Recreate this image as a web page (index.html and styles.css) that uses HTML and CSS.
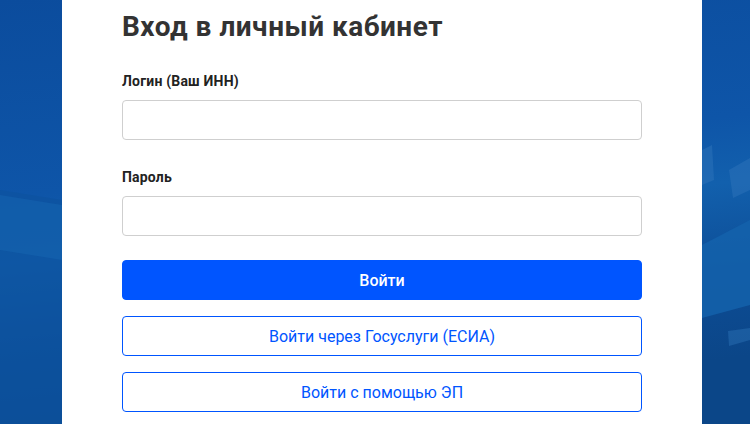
FILE: index.html
```html
<!DOCTYPE html>
<html lang="ru">
<head>
<meta charset="utf-8">
<title>Вход в личный кабинет</title>
<link rel="stylesheet" href="styles.css">
</head>
<body>
<svg class="bg-art" viewBox="0 0 750 424" preserveAspectRatio="none" aria-hidden="true">
  <defs>
    <linearGradient id="g" x1="0" y1="0" x2="0.2" y2="1">
      <stop offset="0" stop-color="#0b4c9d"/>
      <stop offset="0.45" stop-color="#0e55a8"/>
      <stop offset="0.6" stop-color="#1260ad"/>
      <stop offset="0.8" stop-color="#0d4d96"/>
      <stop offset="1" stop-color="#0b4688"/>
    </linearGradient>
  </defs>
  <rect width="750" height="424" fill="url(#g)"/>
  <polygon points="0,190 62,200 62,424 0,424" fill="#0d52a0" opacity="0.7"/>
  <polygon points="0,195 62,205 62,260 0,250" fill="#1565b2" opacity="0.5"/>
  <polygon points="702,150 712,145 714,180 702,185" fill="#2a70b8" opacity="0.6"/>
  <polygon points="729,170 750,158 750,190 733,198" fill="#2a70b8" opacity="0.6"/>
  <polygon points="702,245 750,220 750,305 702,318" fill="#1463ad" opacity="0.8"/>
  <polygon points="728,331 750,328 750,340 729,346" fill="#2a6fb4" opacity="0.5"/>
</svg>
<main class="card">
  <h1 class="title">Вход в личный кабинет</h1>
  <form class="form">
    <label class="field">
      <span class="label">Логин (Ваш ИНН)</span>
      <input class="input" type="text">
    </label>
    <label class="field">
      <span class="label">Пароль</span>
      <input class="input" type="password">
    </label>
    <div class="actions">
      <button type="button" class="btn btn-primary">Войти</button>
      <button type="button" class="btn btn-outline">Войти через Госуслуги (ЕСИА)</button>
      <button type="button" class="btn btn-outline">Войти с помощью ЭП</button>
    </div>
  </form>
</main>
</body>
</html>
```
FILE: styles.css
```css
* { box-sizing: border-box; }
html, body { margin: 0; padding: 0; }
body {
  width: 750px;
  height: 424px;
  overflow: hidden;
  background: #0d4f9c;
  font-family: Roboto, "Liberation Sans", Arial, sans-serif;
  position: relative;
  display: flex;
  justify-content: flex-start;
}
.bg-art {
  position: absolute;
  left: 0;
  top: 0;
  width: 750px;
  height: 424px;
  z-index: 0;
}
.card {
  position: relative;
  z-index: 1;
  margin-left: 62px;
  width: 640px;
  min-height: 424px;
  background: #fff;
  padding: 10px 60px 0 60px;
}
.title {
  margin: 0;
  font-size: 28px;
  line-height: 34px;
  font-weight: 700;
  letter-spacing: 0.5px;
  color: #333;
}
.form {
  display: flex;
  flex-direction: column;
  margin-top: 27px;
}
.field {
  display: flex;
  flex-direction: column;
  gap: 9px;
  margin-bottom: 27px;
}
.field:nth-child(2) { margin-bottom: 24px; }
.label {
  font-size: 14px;
  line-height: 20px;
  font-weight: 700;
  letter-spacing: 0.2px;
  color: #222;
}
.input {
  height: 40px;
  width: 520px;
  border: 1px solid #cfcfcf;
  border-radius: 4px;
  background: #fff;
  padding: 0 12px;
  font: inherit;
}
.actions {
  display: flex;
  flex-direction: column;
  gap: 16px;
}
.btn {
  height: 40px;
  width: 520px;
  border-radius: 4px;
  font-family: Roboto, "Liberation Sans", Arial, sans-serif;
  font-size: 16px;
  cursor: pointer;
}
.btn-primary {
  background: #0055ff;
  border: 1px solid #0055ff;
  color: #fff;
  font-weight: 500;
}
.btn-outline {
  background: #fff;
  border: 1px solid #0055ff;
  color: #0055ff;
  font-weight: 400;
}
```
